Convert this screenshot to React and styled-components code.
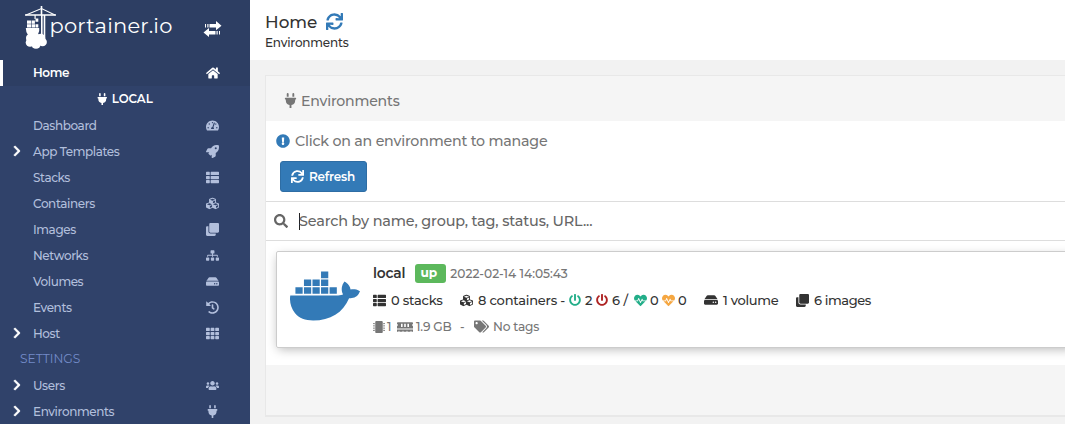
import React from "react";
import styled, { createGlobalStyle } from "styled-components";
import {
  FaHome, FaPlug, FaTachometerAlt, FaRocket, FaThList, FaCubes, FaClone, FaSitemap, FaHdd,
  FaHistory, FaTh, FaUsers, FaChevronRight, FaSync, FaExclamationCircle, FaSearch, FaDocker,
  FaPowerOff, FaHeartbeat, FaMicrochip, FaMemory, FaTags,
} from "react-icons/fa";

const Global = createGlobalStyle`
  * { box-sizing: border-box; }
  body { margin: 0; font-family: Montserrat, Inter, "Open Sans", sans-serif; background: #f2f2f2; }
  svg { display: block; flex: none; }
`;

const Page = styled.div`
  display: flex;
  width: 1065px;
  height: 424px;
  overflow: hidden;
`;

const Sidebar = styled.nav`
  width: 250px;
  flex: none;
  background: #30426a;
  color: #b2bfdc;
`;

const Brand = styled.div`
  height: 60px;
  background: #2d3e63;
  display: flex;
  justify-content: space-between;
  padding: 6px 28px 0 25px;
  color: #fff;
`;

const Logo = styled.div`
  display: flex;
`;

const LogoText = styled.span`
  font-size: 21px;
  font-weight: 400;
  line-height: 26px;
  letter-spacing: 0.2px;
  margin: 7px 0 0 -7.500px;
`;

const Toggle = styled.div`
  padding-top: 15px;
`;

const Row = styled.div`
  height: 26px;
  display: flex;
  align-items: center;
  padding: ${(p) => (p.$active ? "0 27px 1px 0" : "0 28px 0 0")};
  font-size: 12px;
  font-weight: ${(p) => (p.$active ? 600 : 500)};
  letter-spacing: -0.4px;
  border-left: 3px solid ${(p) => (p.$active ? "#fff" : "transparent")};
  background: ${(p) => (p.$active ? "#2d3e63" : "transparent")};
  color: ${(p) => (p.$active ? "#fff" : "inherit")};
`;

const Caret = styled.span`
  width: 30px;
  padding-left: 8px;
  color: #fff;
`;

const RowLabel = styled.span`
  flex: 1;
  white-space: nowrap;
`;

const RowIcon = styled.span`
  width: 20px;
  display: flex;
  justify-content: center;
`;

const EndpointTitle = styled.div`
  height: 26px;
  display: flex;
  align-items: center;
  justify-content: center;
  gap: 3px;
  padding: 0 1px 0 0;
  color: #fff;
  font-size: 11.8px;
  font-weight: 600;
`;

const SectionTitle = styled.div`
  height: 26px;
  line-height: 26px;
  padding-left: 20px;
  color: #738bc8;
  font-size: 12.2px;
`;

const Main = styled.main`
  flex: 1;
  min-width: 0;
  background: #f2f2f2;
  color: #333;
`;

const Header = styled.header`
  height: 60px;
  background: #fff;
  padding: 11px 0 0 15px;
`;

const TitleLine = styled.div`
  display: flex;
  align-items: center;
  gap: 9px;
  height: 21px;
`;

const Subtitle = styled.div`
  margin-top: 2px;
  line-height: 17px;
  font-size: 12px;
  font-weight: 500;
  letter-spacing: -0.2px;
`;

const Panel = styled.section`
  margin: 15px 0 0 15px;
  height: 342px;
  background: #f5f5f5;
  border: 1px solid #e8e8e8;
  border-width: 1px 0 2px 1px;
`;

const PanelHead = styled.div`
  height: 45px;
  display: flex;
  align-items: center;
  padding: 4px 0 0 17px;
  gap: 3px;
  color: #767676;
`;

const PanelBody = styled.div`
  height: 244px;
  background: #fff;
`;

const Hint = styled.div`
  height: 40px;
  display: flex;
  align-items: center;
  gap: 5px;
  padding: 0 0 1px 10px;
  color: #767676;
`;

const HintIcon = styled.span`
  color: #337ab7;
`;

const Button = styled.button`
  margin: 0 0 0 14px;
  width: 87px;
  height: 31px;
  border: 1px solid #2e6da4;
  border-radius: 3px;
  background: #337ab7;
  color: #fff;
  font-family: inherit;
  display: flex;
  align-items: center;
  padding: 0 0 1px 10px;
  gap: 5px;
`;

const SearchBar = styled.div`
  margin-top: 9px;
  height: 40px;
  border: solid #ddd;
  border-width: 1px 0;
  display: flex;
  align-items: center;
  padding: 0 0 1px 8px;
  color: #666;
`;

const Cursor = styled.span`
  width: 1px;
  height: 17px;
  margin: 1px -1px 0 11px;
  background: #222;
`;

const Card = styled.article`
  margin: 10px -10px 0 10px;
  height: 97px;
  border: 1px solid #ccc;
  border-radius: 2px;
  box-shadow: 0 3px 10px -2px #b4b4b4;
  display: flex;
  padding: 8px 0 0 13px;
`;

const Whale = styled.div`
  width: 71px;
  margin-top: 1px;
  color: #337ab7;
`;

const Details = styled.div`
  margin-left: 12px;
`;

const Line = styled.div`
  display: flex;
  align-items: center;
  height: ${(p) => p.$h || 27}px;
  padding-bottom: 1px;
  color: ${(p) => p.$color || "#333"};
`;

const Badge = styled.span`
  width: 31px;
  height: 19px;
  margin: 1px 4px 0 10px;
  border-radius: 3px;
  background: #5cb85c;
  color: #fff;
  display: flex;
  justify-content: center;
  align-items: center;
  padding: 0 4px 2px 0;
`;

const Text = styled.span`
  font-size: ${(p) => p.$size || 13}px;
  font-weight: ${(p) => p.$weight || 500};
  letter-spacing: ${(p) => (p.$ls === undefined ? -0.2 : p.$ls)}px;
  color: ${(p) => p.$color || "inherit"};
  white-space: pre;
`;

const Group = styled.span`
  display: flex;
  align-items: center;
  flex: none;
  width: ${(p) => (p.$w ? `${p.$w}px` : "auto")};
  gap: ${(p) => (p.$gap === undefined ? 4 : p.$gap)}px;
  color: ${(p) => p.$color || "inherit"};
`;

const entries = [
  ["Dashboard", FaTachometerAlt],
  ["App Templates", FaRocket, true],
  ["Stacks", FaThList],
  ["Containers", FaCubes],
  ["Images", FaClone],
  ["Networks", FaSitemap],
  ["Volumes", FaHdd],
  ["Events", FaHistory],
  ["Host", FaTh, true],
];

const settings = [
  ["Users", FaUsers, true],
  ["Environments", FaPlug, true],
];

function MenuRow({ label, Icon, caret, active }) {
  return (
    <Row $active={active}>
      <Caret>{caret && <FaChevronRight size={12} stroke="currentColor" strokeWidth={20} />}</Caret>
      <RowLabel>{label}</RowLabel>
      <RowIcon><Icon size={active ? 14 : 13} /></RowIcon>
    </Row>
  );
}

function CraneLogo() {
  return (
    <svg width="32" height="43" viewBox="0 0 32 43" fill="#fff">
      <path d="M1 9L16.500 2.500 30 9" fill="none" stroke="#fff" strokeWidth="1.100" />
      <path d="M0 8.300h31v1.500H0zM15.700 0h1.600v9h-1.600zM16 9h1.600v20H16zM18.700 9h1.600v24h-1.600zM9.500 9h1.200v4H9.500z" />
      <path d="M10.500 12.500h2.800v3.200h-2.800zM2 14.500h4v3.200H2zM6.600 14.500h3.300v3.200H6.600zM2 18.300h4v3.200H2zM6.600 18.300H10v3.200H6.600zM10.500 18.300h2.800v3.200h-2.800zM0.800 22h13.400v3l-1.500 4H3Q0.800 26 0.800 22z" />
      <circle cx="4.800" cy="32" r="3.800" />
      <circle cx="10.500" cy="31.500" r="4.500" />
      <circle cx="16" cy="32" r="4.200" />
      <circle cx="17.600" cy="36" r="4.300" />
      <circle cx="5" cy="36.500" r="4.300" />
      <circle cx="11" cy="38" r="4.800" />
    </svg>
  );
}

function TransferIcon() {
  return (
    <svg width="19" height="16" viewBox="0 0 19 16" fill="#fff">
      <path d="M2 3h1v3.500H2zM4.300 3h1.200v3.500H4.300zM6.500 3H13V0l5.500 4.700L13 9.200V6.500H6.500z" />
      <path d="M17 10h-1v3.500h1zM14.700 10h-1.200v3.500h1.200zM12.500 10H6V7L0.500 11.500 6 16v-2.500h6.500z" />
    </svg>
  );
}

export default function App() {
  return (
    <Page>
      <Global />
      <Sidebar>
        <Brand>
          <Logo>
            <CraneLogo />
            <LogoText>portainer.io</LogoText>
          </Logo>
          <Toggle><TransferIcon /></Toggle>
        </Brand>
        <MenuRow label="Home" Icon={FaHome} active />
        <EndpointTitle><FaPlug size={12.5} />LOCAL</EndpointTitle>
        {entries.map(([label, Icon, caret]) => (
          <MenuRow key={label} label={label} Icon={Icon} caret={caret} />
        ))}
        <SectionTitle>SETTINGS</SectionTitle>
        {settings.map(([label, Icon, caret]) => (
          <MenuRow key={label} label={label} Icon={Icon} caret={caret} />
        ))}
      </Sidebar>
      <Main>
        <Header>
          <TitleLine>
            <Text $size={16.8} $ls={0}>Home</Text>
            <HintIcon><FaSync size={17} /></HintIcon>
          </TitleLine>
          <Subtitle>Environments</Subtitle>
        </Header>
        <Panel>
          <PanelHead>
            <FaPlug size={15} />
            <Text $size={14.1}>Environments</Text>
          </PanelHead>
          <PanelBody>
            <Hint>
              <HintIcon><FaExclamationCircle size={14} /></HintIcon>
              <Text $size={14.2}>Click on an environment to manage</Text>
            </Hint>
            <Button>
              <FaSync size={13} />
              <Text $size={12} $weight={600}>Refresh</Text>
            </Button>
            <SearchBar>
              <FaSearch size={14} />
              <Cursor />
              <Text $size={14.4} $ls={-0.15}>Search by name, group, tag, status, URL...</Text>
            </SearchBar>
            <Card>
              <Whale><FaDocker size={70} /></Whale>
              <Details>
                <Line>
                  <Text $size={13.8} $weight={600}>local</Text>
                  <Badge><Text $size={12.2} $weight={700}>up</Text></Badge>
                  <Text $size={12.2} $ls={0} $color="#767676">2022-02-14 14:05:43</Text>
                </Line>
                <Line>
                  <Group $w={87} $gap={5}><FaThList size={13} /><Text>0 stacks</Text></Group>
                  <Group $w={109} $gap={5}><FaCubes size={13} /><Text>8 containers -</Text></Group>
                  <Group $w={27}><Group $color="#23ae89"><FaPowerOff size={12} /></Group><Text>2</Text></Group>
                  <Group $w={38}><Group $color="#ae2323"><FaPowerOff size={12} /></Group><Text $ls={0}>6 /</Text></Group>
                  <Group $w={28} $gap={3}><Group $color="#23ae89"><FaHeartbeat size={13} /></Group><Text>0</Text></Group>
                  <Group $w={42} $gap={3}><Group $color="#f5a742"><FaHeartbeat size={13} /></Group><Text>0</Text></Group>
                  <Group $w={92} $gap={5}><FaHdd size={14} /><Text $ls={-0.3}>1 volume</Text></Group>
                  <Group $w={90} $gap={5}><FaClone size={13} /><Text $ls={-0.4}>6 images</Text></Group>
                </Line>
                <Line $color="#767676" $h={26}>
                  <Group $w={24} $gap={2}><FaMicrochip size={12} /><Text $size={12}>1</Text></Group>
                  <Group $w={63} $gap={3}><FaMemory size={16} /><Text $size={12.2}>1.9 GB</Text></Group>
                  <Group $w={14}><Text $size={12}>-</Text></Group>
                  <Group $w={80} $gap={4}><FaTags size={15} /><Text $size={12.2}>No tags</Text></Group>
                </Line>
              </Details>
            </Card>
          </PanelBody>
        </Panel>
      </Main>
    </Page>
  );
}
